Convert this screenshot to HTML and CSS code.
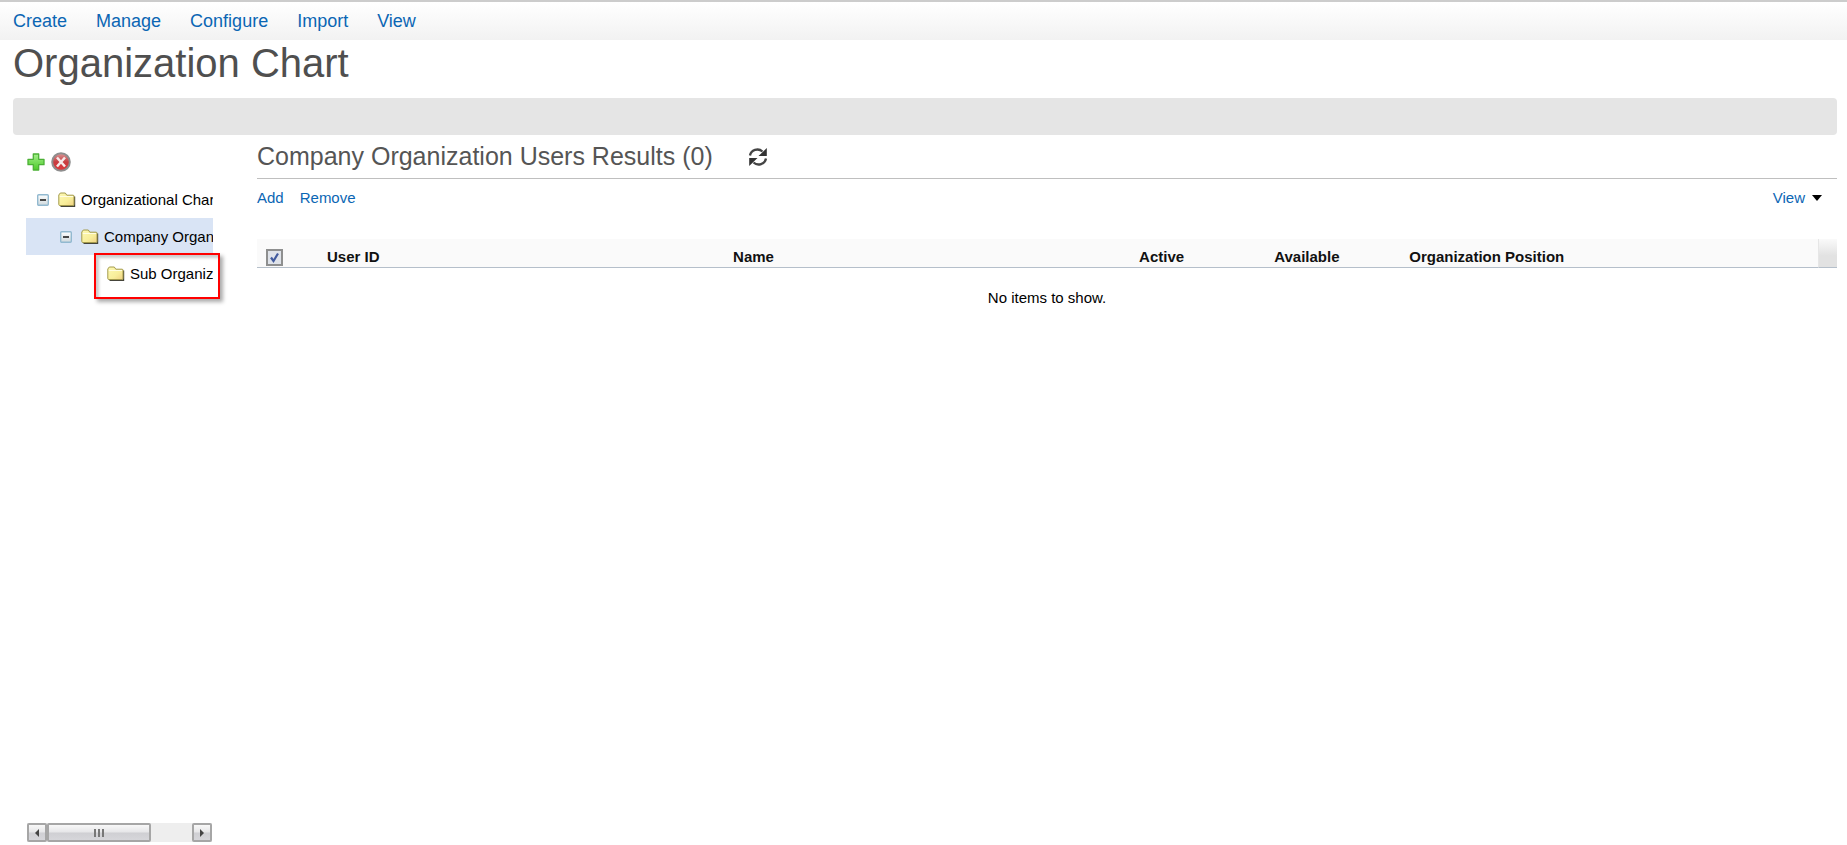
FILE: index.html
```html
<!DOCTYPE html>
<html lang="en">
<head>
<meta charset="utf-8">
<title>Organization Chart</title>
<link rel="stylesheet" href="styles.css">
</head>
<body>
<svg class="defs" aria-hidden="true">
  <defs>
    <linearGradient id="g-folder" x1="0" y1="0" x2="1" y2="1"><stop offset="0" stop-color="#fdf9b4"/><stop offset=".6" stop-color="#f8ee9a"/><stop offset="1" stop-color="#f0d084"/></linearGradient>
    <linearGradient id="g-plus" x1="0" y1="0" x2="0" y2="1"><stop offset="0" stop-color="#a3ee8b"/><stop offset="1" stop-color="#4ccb28"/></linearGradient>
    <linearGradient id="g-red" x1="0" y1="0" x2="0" y2="1"><stop offset="0" stop-color="#d89a9a"/><stop offset=".5" stop-color="#c83c40"/><stop offset="1" stop-color="#e0383c"/></linearGradient>
    <linearGradient id="g-toggle" x1="0" y1="0" x2="0" y2="1"><stop offset="0" stop-color="#fff"/><stop offset="1" stop-color="#cfd8dc"/></linearGradient>
    <symbol id="folder" viewBox="0 0 18 15">
      <path d="M2.500 14.200h14V4.500" fill="none" stroke="#45443a" stroke-width="1.400"/>
      <path d="M.8 12.500V3L2.300 1h5L8.800 3.200h6.200q1 0 1 1v8.300q0 1-1 1H1.800q-1 0-1-1z" fill="url(#g-folder)" stroke="#a39a4c"/>
      <path d="M1.800 4.500h13.200" stroke="#fffde2"/>
    </symbol>
    <symbol id="minus" viewBox="0 0 12 12">
      <rect x=".7" y=".7" width="10.6" height="10.6" rx="1" fill="url(#g-toggle)" stroke="#92b9d0" stroke-width="1.400"/>
      <path d="M3 6h6" stroke="#111" stroke-width="1.500"/>
    </symbol>
  </defs>
</svg>

<nav class="menu">
  <a href="#">Create</a><a href="#">Manage</a><a href="#">Configure</a><a href="#">Import</a><a href="#">View</a>
</nav>

<main class="page">
  <h1 class="title">Organization Chart</h1>
  <div class="band"></div>
  <div class="columns">
    <aside class="side">
      <div class="tools">
        <button class="icon-btn" aria-label="Add organization">
          <svg width="18" height="18" viewBox="0 0 18 18"><path d="M6.3 1h5.4v5.3H17v5.4h-5.3V17H6.3v-5.3H1V6.3h5.3z" fill="url(#g-plus)" stroke="#4bb035" stroke-width="1.3" stroke-linejoin="round"/></svg>
        </button>
        <button class="icon-btn" aria-label="Delete organization">
          <svg width="20" height="20" viewBox="0 0 20 20"><circle cx="10" cy="10" r="8.800" fill="url(#g-red)" stroke="#8e8e8e" stroke-width="2"/><path d="M6 5.500l8 9M14 5.500l-8 9" stroke="#f6eaea" stroke-width="2.500"/></svg>
        </button>
      </div>
      <div class="tree-area">
        <ul class="tree">
          <li class="node"><button class="icon-btn" aria-label="Collapse"><svg width="12" height="12"><use href="#minus"/></svg></button><svg width="18" height="15"><use href="#folder"/></svg><span>Organizational Chart</span></li>
          <li class="node level-2 selected"><button class="icon-btn" aria-label="Collapse"><svg width="12" height="12"><use href="#minus"/></svg></button><svg width="18" height="15"><use href="#folder"/></svg><span>Company Organization</span></li>
          <li class="node level-3"><svg width="18" height="15"><use href="#folder"/></svg><span>Sub Organization</span></li>
        </ul>
        <div class="callout"></div>
      </div>
      <div class="scroller">
        <button class="scroll-btn" aria-label="Scroll left"><svg width="6" height="8" viewBox="0 0 6 8"><path d="M5 0v8L1 4z" fill="#444"/></svg></button>
        <div class="track"><div class="thumb"><i></i><i></i><i></i></div></div>
        <button class="scroll-btn" aria-label="Scroll right"><svg width="6" height="8" viewBox="0 0 6 8"><path d="M1 0v8l4-4z" fill="#444"/></svg></button>
      </div>
    </aside>

    <section class="results">
      <header class="results-head">
        <h2>Company Organization Users Results (0)</h2>
        <button class="icon-btn" aria-label="Refresh">
          <svg width="20" height="20" viewBox="0 0 20 20"><g fill="none" stroke="#444" stroke-width="2.300"><path d="M2 8.500C3 3 10 .5 14.500 4.500"/><path d="M18 11.500C17 17 10 19.500 5.500 15.500"/></g><path d="M18.800 1v8h-8.300zM1.200 19v-8h8.300z" fill="#333"/></svg>
        </button>
      </header>
      <div class="actions">
        <a href="#">Add</a><a href="#">Remove</a>
        <button class="view-menu">View<svg width="10" height="6" viewBox="0 0 10 6"><path d="M0 0h10L5 6z" fill="#000"/></svg></button>
      </div>
      <table class="grid">
        <colgroup><col class="c-check"><col class="c-wide"><col class="c-wide"><col class="c-small"><col class="c-small"><col><col class="c-end"></colgroup>
        <thead><tr>
          <th><input class="check" type="checkbox" checked aria-label="Select all"></th>
          <th>User ID</th><th>Name</th><th>Active</th><th>Available</th><th>Organization Position</th><td class="end"></td>
        </tr></thead>
        <tbody><tr><td class="empty" colspan="7">No items to show.</td></tr></tbody>
      </table>
    </section>
  </div>
</main>
</body>
</html>
```
FILE: styles.css
```css
* { box-sizing: border-box; }
body {
  margin: 0;
  min-height: 100vh;
  display: flex;
  flex-direction: column;
  background: #fff;
  color: #000;
  font: 15px/20px "Liberation Sans", Arial, sans-serif;
}
a { color: #0b66b4; text-decoration: none; }
svg { display: block; flex: none; }
.defs { position: absolute; width: 0; height: 0; }
.icon-btn { padding: 0; border: 0; background: none; cursor: pointer; }

.menu {
  display: flex;
  gap: 29px;
  height: 40px;
  padding: 9px 13px 0;
  border-top: 2px solid #ccc;
  background: linear-gradient(#fff, #f2f2f2);
  font-size: 18px;
}

.page { flex: 1; display: flex; flex-direction: column; padding: 0 10px 3px 13px; }
.title { margin: 0; font-size: 40px; line-height: 46px; font-weight: normal; color: #4f4f4f; }
.band { height: 37px; margin-top: 12px; border-radius: 4px; background: #e5e5e5; }
.columns { flex: 1; display: flex; gap: 44px; padding-left: 13px; }

.side { width: 187px; flex: none; display: flex; flex-direction: column; }
.tools { display: flex; align-items: center; gap: 6px; height: 20px; margin: 17px 0 9px 1px; }
.tree-area { position: relative; flex: 1; }
.tree { margin: 0; padding: 0; list-style: none; overflow: hidden; }
.node { display: flex; align-items: center; height: 37px; padding-left: 11px; white-space: nowrap; }
.node .icon-btn { margin-right: 9px; }
.node span { margin-left: 5px; }
.level-2 { padding-left: 34px; }
.level-3 { padding-left: 81px; }
.selected { background: #d9e4f5; }
.callout {
  position: absolute;
  left: 68px;
  top: 72px;
  width: 126px;
  height: 46px;
  border: 2px solid #f00;
  box-shadow: 3px 3px 4px #0005, inset 3px 3px 3px #0003;
}

.scroller { display: flex; height: 19px; margin: 0 1px; background: #eee; }
.scroll-btn, .thumb {
  display: flex;
  align-items: center;
  justify-content: center;
  height: 19px;
  padding: 0;
  border: 2px solid #a6a6a6;
  border-radius: 2px;
  background: linear-gradient(#f8f8f8, #e6e6e8 48%, #cfcfd3 52%, #d6d6da);
}
.scroll-btn { width: 20px; }
.track { flex: 1; }
.thumb { width: 72%; gap: 2px; }
.thumb i { width: 2px; height: 8px; background: #777; }

.results { flex: 1; min-width: 0; }
.results-head { display: flex; align-items: center; gap: 35px; height: 44px; border-bottom: 1px solid #bfbfbf; }
.results-head h2 { margin: 0; padding-bottom: 2px; font-size: 25px; line-height: 28px; font-weight: normal; color: #555; }
.actions { display: flex; gap: 16px; height: 60px; padding: 9px 15px 0 0; }
.view-menu {
  display: flex;
  align-items: center;
  gap: 7px;
  height: 20px;
  margin-left: auto;
  padding: 0;
  border: 0;
  background: none;
  color: #0b66b4;
  font: inherit;
}

.grid { width: 100%; table-layout: fixed; border-collapse: separate; border-spacing: 0; }
.c-check { width: 62px; }
.c-wide { width: 25.7%; }
.c-small { width: 8.55%; }
.c-end { width: 19px; }
.grid thead tr { height: 29px; background: #fafafa; }
.grid thead th, .grid .end { border-bottom: 1px solid #b5bfca; }
.grid th { padding: 8px 8px 0; text-align: left; color: #111; }
.grid .end { padding: 0; border-left: 1px solid #e6e6e6; background: linear-gradient(#fafafa, #e2e2e2 60%); }
.check {
  appearance: none;
  display: block;
  width: 17px;
  height: 17px;
  margin: 2px 0 1px 1px;
  border: 2px solid #8e8f8f;
  background: #dfe3ea url("data:image/svg+xml,%3Csvg xmlns='http://www.w3.org/2000/svg' viewBox='0 0 13 13'%3E%3Cpath d='M3 6.500L5.500 10L10 2.500' fill='none' stroke='%23415a9e' stroke-width='2.200'/%3E%3C/svg%3E") center / 13px 13px;
}
.empty { padding: 20px 0 0; text-align: center; }
```
